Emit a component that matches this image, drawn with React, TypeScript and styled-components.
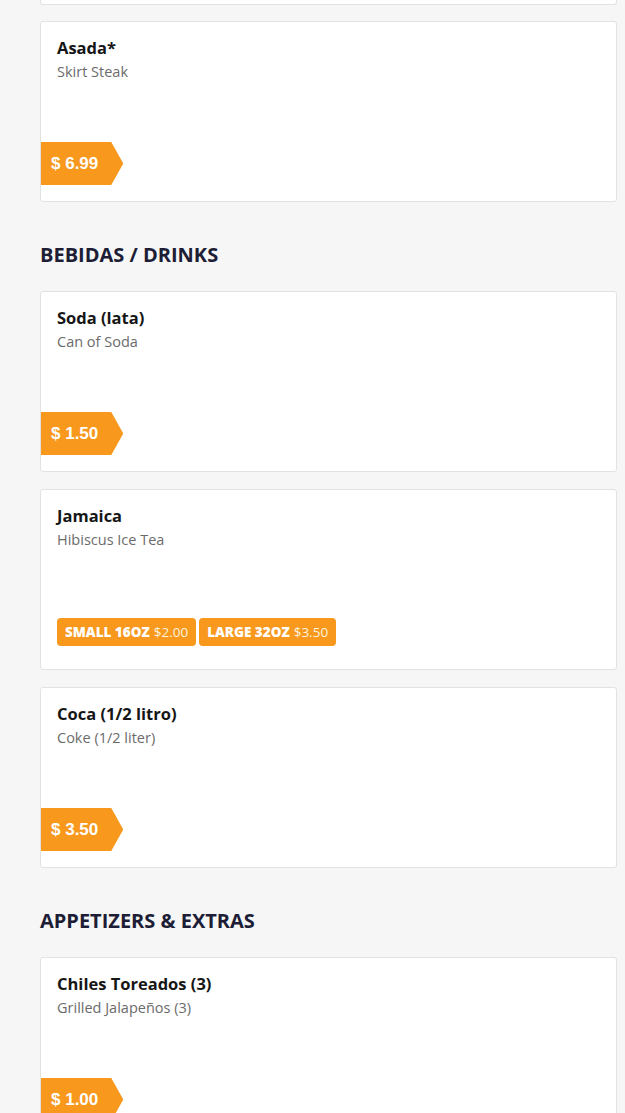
import { FC } from "react";
import styled, { createGlobalStyle } from "styled-components";

interface Size {
  label: string;
  price: string;
}

interface MenuItem {
  name: string;
  description: string;
  price?: string;
  sizes?: Size[];
}

interface Section {
  title?: string;
  items: MenuItem[];
}

const GlobalStyle = createGlobalStyle`
  html, body {
    margin: 0;
    padding: 0;
    background: #f6f6f6;
    overflow: hidden;
  }
  body {
    font-family: "Open Sans", "Noto Sans", sans-serif;
  }
`;

const Page = styled.div`
  padding: 0 8px 40px 40px;
`;

// bottom edge of the card above, scrolled out of view
const CardTail = styled.div`
  height: 4px;
  background: #fff;
  border: 1px solid #e2e2e2;
  border-top: none;
  border-radius: 0 0 3px 3px;
  margin-bottom: 16px;
`;

const SectionTitle = styled.h2`
  margin: 40px 0 23px;
  font-size: 20px;
  line-height: 26px;
  font-weight: 700;
  color: #1d1d35;
`;

const List = styled.div`
  display: flex;
  flex-direction: column;
  gap: 17px;
`;

const Card = styled.div`
  display: flex;
  flex-direction: column;
  min-height: 181px;
  box-sizing: border-box;
  padding: 15px 16px 16px;
  background: #fff;
  border: 1px solid #e2e2e2;
  border-radius: 3px;
`;

const Name = styled.h3`
  margin: 0;
  font-size: 16.5px;
  line-height: 22px;
  font-weight: 700;
  color: #161616;
`;

const Description = styled.p`
  margin: 3px 0 0;
  font-size: 14.5px;
  line-height: 20px;
  color: #6b6b6b;
`;

const Footer = styled.div`
  margin-top: auto;
  height: 43px;
  display: flex;
  align-items: center;
  gap: 3px;
`;

const PriceTag = styled.div`
  margin-left: -16px;
  height: 43px;
  display: flex;
  align-items: center;
  padding: 0 25px 0 10px;
  background: #f8981d;
  color: #fff;
  font-family: "Liberation Sans", Arial, sans-serif;
  font-size: 17px;
  font-weight: 700;
  clip-path: polygon(0 0, calc(100% - 12px) 0, 100% 50%, calc(100% - 12px) 100%, 0 100%);
`;

const SizeBadge = styled.div`
  height: 28px;
  box-sizing: border-box;
  display: flex;
  align-items: center;
  gap: 4px;
  padding: 0 8px;
  background: #f8981d;
  border-radius: 4px;
  color: #fff;
  font-size: 13.5px;
`;

const SizeLabel = styled.span`
  font-weight: 800;
  text-transform: uppercase;
`;

const SizePrice = styled.span`
  font-weight: 400;
  color: #fff3dd;
`;

const sections: Section[] = [
  {
    items: [{ name: "Asada*", description: "Skirt Steak", price: "$ 6.99" }],
  },
  {
    title: "BEBIDAS / DRINKS",
    items: [
      { name: "Soda (lata)", description: "Can of Soda", price: "$ 1.50" },
      {
        name: "Jamaica",
        description: "Hibiscus Ice Tea",
        sizes: [
          { label: "Small 16oz", price: "$2.00" },
          { label: "Large 32oz", price: "$3.50" },
        ],
      },
      { name: "Coca (1/2 litro)", description: "Coke (1/2 liter)", price: "$ 3.50" },
    ],
  },
  {
    title: "APPETIZERS & EXTRAS",
    items: [
      { name: "Chiles Toreados (3)", description: "Grilled Jalapeños (3)", price: "$ 1.00" },
    ],
  },
];

const ItemCard: FC<{ item: MenuItem }> = ({ item }) => (
  <Card>
    <Name>{item.name}</Name>
    <Description>{item.description}</Description>
    <Footer>
      {item.price && <PriceTag>{item.price}</PriceTag>}
      {item.sizes &&
        item.sizes.map((s) => (
          <SizeBadge key={s.label}>
            <SizeLabel>{s.label}</SizeLabel>
            <SizePrice>{s.price}</SizePrice>
          </SizeBadge>
        ))}
    </Footer>
  </Card>
);

const App: FC = () => {
  return (
    <>
      <GlobalStyle />
      <Page>
        <CardTail />
        {sections.map((section, idx) => (
          <div key={idx}>
            {section.title && <SectionTitle>{section.title}</SectionTitle>}
            <List>
              {section.items.map((item) => (
                <ItemCard key={item.name} item={item} />
              ))}
            </List>
          </div>
        ))}
      </Page>
    </>
  );
};

export default App;
